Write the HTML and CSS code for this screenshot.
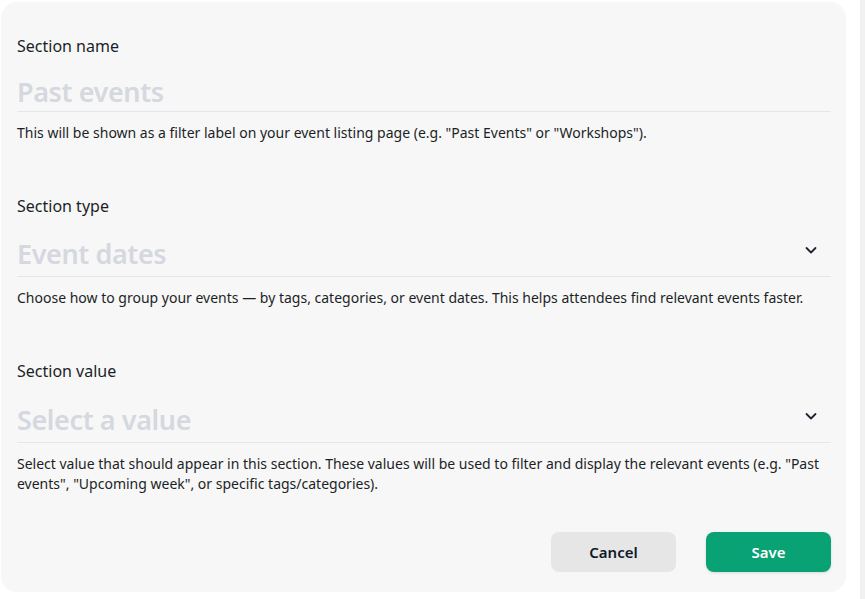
FILE: index.html
```html
<!DOCTYPE html>
<html lang="en">
<head>
    <meta charset="UTF-8">
    <meta name="viewport" content="width=device-width, initial-scale=1.0">
    <title>Edit section</title>
    <link rel="stylesheet" href="styles.css">
</head>
<body>
    <div class="page">
        <form class="section-form">
            <div class="field">
                <label class="field-label" for="sectionName">Section name</label>
                <div class="field-control">
                    <input type="text" id="sectionName" placeholder="Past events">
                </div>
                <p class="field-help">This will be shown as a filter label on your event listing page (e.g. "Past Events" or "Workshops").</p>
            </div>

            <div class="field">
                <label class="field-label" for="sectionType">Section type</label>
                <div class="field-control select-control">
                    <span class="select-value">Event dates</span>
                    <svg class="chevron" width="14" height="14" viewBox="0 0 14 14" fill="none">
                        <path d="M2.5 5l4.5 4.5L11.5 5" stroke="currentColor" stroke-width="1.8" stroke-linecap="round" stroke-linejoin="round"/>
                    </svg>
                </div>
                <p class="field-help">Choose how to group your events — by tags, categories, or event dates. This helps attendees find relevant events faster.</p>
            </div>

            <div class="field field-last">
                <label class="field-label" for="sectionValue">Section value</label>
                <div class="field-control select-control">
                    <span class="select-value">Select a value</span>
                    <svg class="chevron" width="14" height="14" viewBox="0 0 14 14" fill="none">
                        <path d="M2.5 5l4.5 4.5L11.5 5" stroke="currentColor" stroke-width="1.8" stroke-linecap="round" stroke-linejoin="round"/>
                    </svg>
                </div>
                <p class="field-help">Select value that should appear in this section. These values will be used to filter and display the relevant events (e.g. "Past events", "Upcoming week", or specific tags/categories).</p>
            </div>

            <div class="form-actions">
                <button type="button" class="btn btn-cancel">Cancel</button>
                <button type="button" class="btn btn-save">Save</button>
            </div>
        </form>
        <div class="scroll-track"></div>
    </div>
</body>
</html>
```

FILE: styles.css
```css
:root {
    --panel: #f7f7f7;
    --text: #1c1f26;
    --placeholder: #d5d8de;
    --line: #e3e7ec;
    --green: #08a275;
}

* {
    box-sizing: border-box;
    margin: 0;
    padding: 0;
    font-family: 'Noto Sans', sans-serif;
}

body {
    background: #fff;
    color: var(--text);
}

.page {
    display: flex;
    height: 599px;
    padding: 2px 0 7px 1px;
}

.section-form {
    width: 845px;
    background: var(--panel);
    border-radius: 16px;
    padding: 33px 15px 20px 16px;
}

.scroll-track {
    width: 5px;
    margin-left: auto;
    margin-top: -2px;
    margin-bottom: -7px;
    background: #f1f1f1;
}

.field {
    margin-bottom: 52px;
}

.field-last {
    margin-bottom: 38px;
}

.field-label {
    display: block;
    font-size: 16px;
    line-height: 22px;
    color: var(--text);
}

.field-control {
    display: flex;
    align-items: center;
    margin-top: 14px;
    border-bottom: 1px solid var(--line);
}

.field-control input {
    width: 100%;
    height: 40px;
    border: none;
    background: transparent;
    font-size: 27px;
    font-weight: 600;
    letter-spacing: -0.4px;
    color: var(--text);
    outline: none;
}

.field-control input::placeholder {
    color: var(--placeholder);
}

.select-control {
    height: 47px;
    margin-top: 13px;
    justify-content: space-between;
}

.field-last .select-control {
    margin-top: 14px;
}

.select-value {
    font-size: 27px;
    font-weight: 600;
    letter-spacing: -0.4px;
    color: var(--placeholder);
}

.chevron {
    color: #1f2433;
    margin-right: 13px;
    margin-top: -6px;
}

.field-help {
    margin-top: 11px;
    font-size: 14px;
    line-height: 20px;
    color: var(--text);
}

.form-actions {
    display: flex;
    justify-content: flex-end;
    gap: 30px;
}

.btn {
    width: 125px;
    height: 40px;
    border: none;
    border-radius: 8px;
    font-size: 15px;
    font-weight: 600;
    cursor: pointer;
}

.btn-cancel {
    background: #e6e6e6;
    color: #111827;
}

.btn-save {
    background: var(--green);
    color: #fff;
    box-shadow: 0 1px 3px rgba(0, 0, 0, 0.12);
}
```
